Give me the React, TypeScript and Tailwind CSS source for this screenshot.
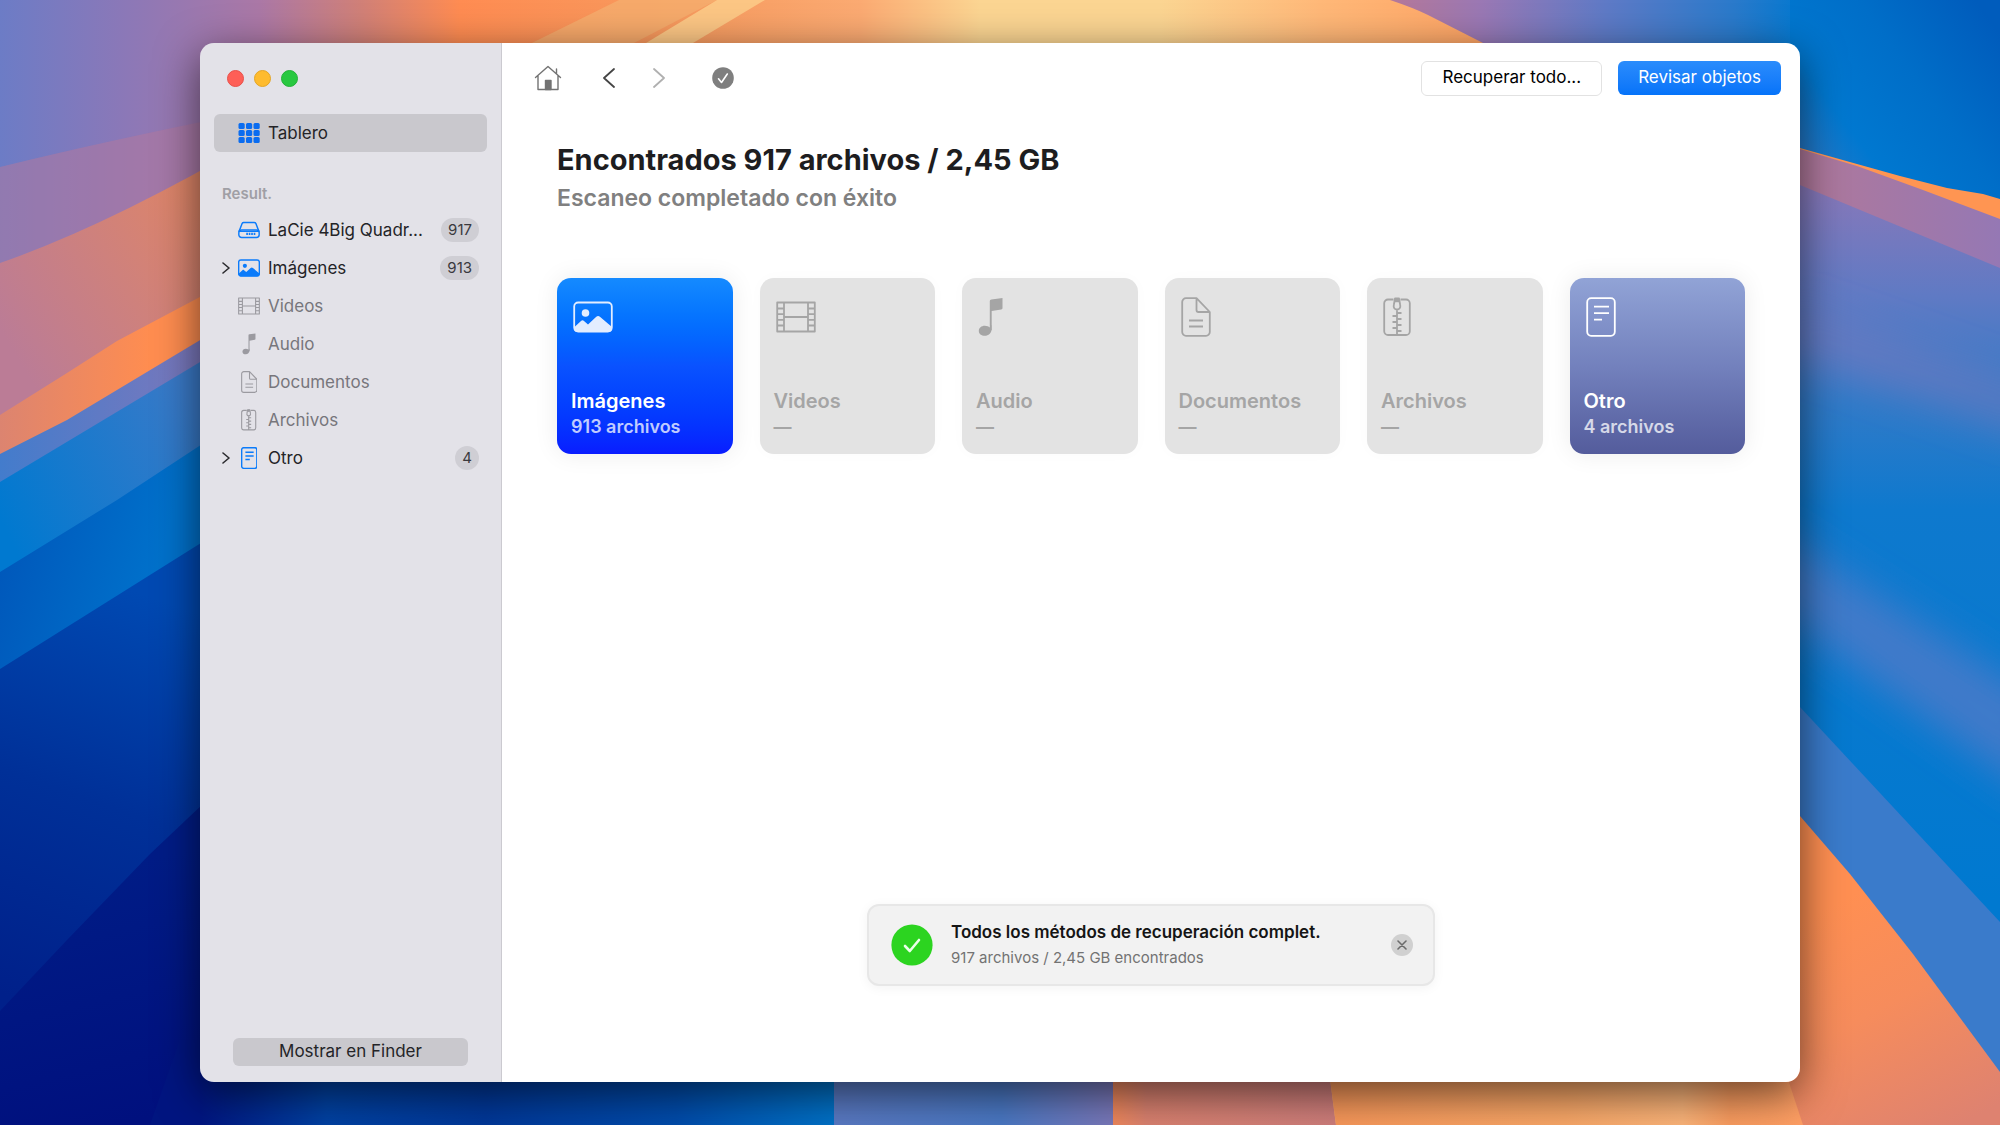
import { useState, type ReactNode } from "react";
import clsx from "clsx";

type IconName = "image" | "film" | "music" | "document" | "archive" | "other" | "drive";

interface Category {
  id: string;
  label: string;
  icon: IconName;
  count: number;
  cardClass: string;
}

const categories: Category[] = [
  { id: "imagenes", label: "Imágenes", icon: "image", count: 913, cardClass: "from-[#158aff] via-[#0a52ff] to-[#0a1cff]" },
  { id: "videos", label: "Videos", icon: "film", count: 0, cardClass: "" },
  { id: "audio", label: "Audio", icon: "music", count: 0, cardClass: "" },
  { id: "documentos", label: "Documentos", icon: "document", count: 0, cardClass: "" },
  { id: "archivos", label: "Archivos", icon: "archive", count: 0, cardClass: "" },
  { id: "otro", label: "Otro", icon: "other", count: 4, cardClass: "from-[#91a3d6] via-[#7381bd] to-[#545c9c]" },
];

// every icon is 40 units high, the width is its own
const icons: Record<IconName, { width: number; body: ReactNode }> = {
  image: {
    width: 40,
    body: (
      <>
        <rect x="1.2" y="5.5" width="37.6" height="29" rx="4" />
        <circle cx="12.5" cy="16" r="3.8" fill="currentColor" stroke="none" />
        <path d="M1.5 30L8 24c1-.9 2-.9 3 0l4 3.4 8-7.4c1.6-1.4 2.6-1.4 4.2 0L39 30v1.5a3.5 3.5 0 01-3.5 3.5h-31A3.5 3.5 0 011 31.5z" fill="currentColor" stroke="none" />
      </>
    ),
  },
  film: {
    width: 40,
    body: <path d="M1.2 5.5h37.6v29H1.2zM8 5.5v29M32 5.5v29M8 20h24M1.2 11.5H8M1.2 17.2H8M1.2 22.8H8M1.2 28.5H8M32 11.5h6.8M32 17.2h6.8M32 22.8h6.8M32 28.5h6.8" />,
  },
  music: {
    width: 26,
    body: (
      <g fill="currentColor" stroke="none">
        <path d="M11.8 4.2c0-1 .6-1.6 1.6-1.8L24.500 1v10c0 .8-.5 1.200-1.300 1.400l-9.500 1.600v19.300h-1.900z" />
        <path d="M13.500 28v4.500c0 3.500-3 6.300-6.700 6.300C3.300 38.800.8 37 .8 34c0-3 2.600-5.200 6-5.200 2.200 0 3.800.7 5 1.700z" />
      </g>
    ),
  },
  document: {
    width: 30,
    body: <path d="M5 1.2h10.500L28.800 15v20a3.800 3.800 0 01-3.800 3.800H5A3.800 3.800 0 011.200 35V5A3.800 3.800 0 015 1.2zM15.500 1.500V13a2 2 0 002 2h11M8 23.500h14M8 29.500h14" />,
  },
  archive: {
    width: 28,
    body: (
      <>
        <path d="M10.500 2.500H5A3.800 3.800 0 001.200 6.300v28A3.800 3.800 0 005 38h18a3.800 3.800 0 003.800-3.800v-28A3.800 3.800 0 0023 2.500h-5.500" />
        <path d="M12 1.200h4v4h-4z" fill="currentColor" stroke="none" />
        <path d="M12 1.500h4l1.200 6.500c.6 2.600-.9 4.500-3.200 4.500S10.200 10.600 10.800 8zM14 12.500V38" />
        <path d="M14 16h4.500M9.500 19H14M14 22h4.500M9.500 25H14M14 28h4.500M9.500 31H14M14 34h4.500" />
      </>
    ),
  },
  other: {
    width: 30,
    body: (
      <>
        <rect x="1.2" y="1.2" width="27.6" height="37.6" rx="4" />
        <path d="M8 9.700h15M8 16.200h15M8 22.700h8" />
      </>
    ),
  },
  drive: {
    width: 40,
    body: (
      <>
        <path d="M10.500 6.500h19c1.500 0 2.500.8 3.200 2L38 22.500H2L7.300 8.500c.7-1.200 1.700-2 3.200-2z" />
        <rect x="1.500" y="20" width="37" height="13.500" rx="5" />
        <path d="M15 27h18" strokeWidth="4" strokeDasharray="3 1.5" />
      </>
    ),
  },
};

function Icon({ name, className, stroke }: { name: IconName; className: string; stroke: number }) {
  const { width, body } = icons[name];
  return (
    <svg viewBox={`0 0 ${width} 40`} className={className} fill="none" stroke="currentColor" strokeWidth={stroke} strokeLinejoin="round" aria-hidden="true">
      {body}
    </svg>
  );
}

function GridIcon() {
  return (
    <svg viewBox="0 0 22 22" className="h-[22px] w-[22px] fill-[#0a6cf0]" aria-hidden="true">
      {[1, 8, 15].map((y) => [0.5, 8, 15.5].map((x) => <rect key={`${x}-${y}`} x={x} y={y} width="6.2" height="6" rx="1.5" />))}
    </svg>
  );
}

function SidebarRow({ icon, label, count, expandable }: { icon: IconName; label: string; count: number; expandable?: boolean }) {
  const empty = count === 0;
  return (
    <li>
      <a href={`#${label}`} className="flex h-[38px] items-center pr-2 pl-2">
        <span className="w-4 shrink-0">
          {expandable && (
            <svg viewBox="0 0 8 12" className="h-3 w-2 fill-none stroke-[#2b2b2e]" aria-hidden="true">
              <path d="M1 1l6 5-6 5" strokeWidth="1.6" strokeLinecap="round" strokeLinejoin="round" />
            </svg>
          )}
        </span>
        <span className="flex w-[22px] shrink-0 justify-center">
          <Icon name={icon} stroke={empty ? 2 : 2.6} className={clsx("h-[22px] w-auto", empty ? "text-[#9b9aa0]" : "text-[#0b7bfa]")} />
        </span>
        <span className={clsx("ml-2 flex-1 pt-0.5 whitespace-nowrap", empty ? "text-[#77767c]" : "text-[#242427]")}>{label}</span>
        {!empty && <span className="flex h-6 min-w-6 items-center justify-center rounded-full bg-[#cfced4] px-[7px] text-[15px] text-[#3a393e]">{count}</span>}
      </a>
    </li>
  );
}

function CategoryCard({ category }: { category: Category }) {
  const empty = category.count === 0;
  return (
    <button
      type="button"
      disabled={empty}
      className={clsx(
        "flex aspect-square flex-col items-start rounded-[14px] px-3.5 pt-[19px] pb-3.5 text-left font-semibold",
        empty ? "bg-[#e3e3e3] text-[#a5a5a5] shadow-[0_0_16px_rgba(0,0,0,0.02)]" : "bg-linear-to-b text-white shadow-[0_0_24px_rgba(0,0,0,0.08)]",
        category.cardClass
      )}
    >
      <Icon name={category.icon} stroke={1.8} className={clsx("ml-0.5 h-10 w-auto", category.id === "imagenes" && "text-[#e3edff]")} />
      <span className="mt-auto text-xl leading-[26px]">{category.label}</span>
      <span className={clsx("text-lg leading-[26px]", !empty && "text-white/75")}>{empty ? "—" : `${category.count} archivos`}</span>
    </button>
  );
}

function Wallpaper() {
  return (
    <svg viewBox="0 0 2000 1125" preserveAspectRatio="none" className="absolute inset-0 h-full w-full" aria-hidden="true">
      <defs>
        <linearGradient id="sky" x1="0" x2="2000" y1="0" y2="0" gradientUnits="userSpaceOnUse">
          <stop offset="0" stopColor="#6c7cc6" />
          <stop offset="0.06" stopColor="#8a78b8" />
          <stop offset="0.13" stopColor="#ab78a6" />
          <stop offset="0.18" stopColor="#d08078" />
          <stop offset="0.23" stopColor="#ff8c52" />
          <stop offset="0.34" stopColor="#f79a5e" />
          <stop offset="0.43" stopColor="#fbaa72" />
          <stop offset="0.49" stopColor="#fbd592" />
          <stop offset="0.58" stopColor="#fbd592" />
          <stop offset="0.66" stopColor="#ffb878" />
          <stop offset="0.74" stopColor="#ffa565" />
        </linearGradient>
        <linearGradient id="right-sky" x1="1390" x2="2000" y1="0" y2="60" gradientUnits="userSpaceOnUse">
          <stop offset="0" stopColor="#b57898" />
          <stop offset="0.15" stopColor="#9a78b4" />
          <stop offset="0.35" stopColor="#5f7ac6" />
          <stop offset="0.56" stopColor="#2a7acb" />
          <stop offset="0.68" stopColor="#0078d0" />
          <stop offset="1" stopColor="#005ebe" />
        </linearGradient>
        <linearGradient id="right-upper" x1="1800" x2="1990" y1="160" y2="20" gradientUnits="userSpaceOnUse">
          <stop offset="0" stopColor="#2a79c8" />
          <stop offset="0.25" stopColor="#0078d0" />
          <stop offset="0.6" stopColor="#006ec8" />
          <stop offset="1" stopColor="#005cbc" />
        </linearGradient>
        <linearGradient id="l2" x1="0" x2="200" y1="330" y2="210" gradientUnits="userSpaceOnUse">
          <stop offset="0" stopColor="#bb7c96" />
          <stop offset="1" stopColor="#de8568" />
        </linearGradient>
        <linearGradient id="l3" x1="0" x2="150" y1="0" y2="0" gradientUnits="userSpaceOnUse">
          <stop offset="0" stopColor="#dc8470" />
          <stop offset="1" stopColor="#ff8d50" />
        </linearGradient>
        <linearGradient id="l4" x1="0" x2="200" y1="0" y2="0" gradientUnits="userSpaceOnUse">
          <stop offset="0" stopColor="#437ccc" />
          <stop offset="1" stopColor="#7c78bc" />
        </linearGradient>
        <linearGradient id="l5" x1="0" x2="200" y1="520" y2="420" gradientUnits="userSpaceOnUse">
          <stop offset="0" stopColor="#0079d0" />
          <stop offset="1" stopColor="#3a7ac8" />
        </linearGradient>
        <linearGradient id="l6" x1="0" x2="150" y1="560" y2="600" gradientUnits="userSpaceOnUse">
          <stop offset="0" stopColor="#0058bb" />
          <stop offset="1" stopColor="#0071cb" />
        </linearGradient>
        <linearGradient id="l7" x1="160" x2="20" y1="600" y2="1000" gradientUnits="userSpaceOnUse">
          <stop offset="0" stopColor="#0049b2" />
          <stop offset="0.5" stopColor="#003098" />
          <stop offset="1" stopColor="#00208a" />
        </linearGradient>
        <linearGradient id="l8" x1="200" x2="834" y1="0" y2="0" gradientUnits="userSpaceOnUse">
          <stop offset="0" stopColor="#001580" />
          <stop offset="0.2" stopColor="#0042a4" />
          <stop offset="0.45" stopColor="#00389a" />
          <stop offset="0.75" stopColor="#004cac" />
          <stop offset="1" stopColor="#0072c8" />
        </linearGradient>
        <linearGradient id="l9" x1="60" x2="120" y1="880" y2="1125" gradientUnits="userSpaceOnUse">
          <stop offset="0" stopColor="#001c86" />
          <stop offset="1" stopColor="#00107e" />
        </linearGradient>
        <linearGradient id="b2" x1="834" x2="1113" y1="0" y2="0" gradientUnits="userSpaceOnUse">
          <stop offset="0" stopColor="#5a7ac4" />
          <stop offset="0.6" stopColor="#4a78c4" />
          <stop offset="1" stopColor="#7a78ba" />
        </linearGradient>
        <linearGradient id="b3" x1="1113" x2="1336" y1="0" y2="0" gradientUnits="userSpaceOnUse">
          <stop offset="0" stopColor="#f0885c" />
          <stop offset="0.15" stopColor="#db8270" />
          <stop offset="1" stopColor="#cf7e7c" />
        </linearGradient>
        <linearGradient id="b4" x1="1330" x2="1800" y1="0" y2="0" gradientUnits="userSpaceOnUse">
          <stop offset="0" stopColor="#f9985a" />
          <stop offset="0.5" stopColor="#faa868" />
          <stop offset="0.75" stopColor="#fdb57a" />
          <stop offset="0.85" stopColor="#fb9d60" />
          <stop offset="1" stopColor="#ff9f64" />
        </linearGradient>
        <linearGradient id="r-mid" x1="0" x2="0" y1="190" y2="900" gradientUnits="userSpaceOnUse">
          <stop offset="0" stopColor="#8678ba" />
          <stop offset="0.15" stopColor="#5f7ac4" />
          <stop offset="0.3" stopColor="#307ac8" />
          <stop offset="0.45" stopColor="#0e79ce" />
          <stop offset="1" stopColor="#0079d0" />
        </linearGradient>
        <linearGradient id="r-mauve" x1="1800" x2="2000" y1="0" y2="0" gradientUnits="userSpaceOnUse">
          <stop offset="0" stopColor="#b0789a" />
          <stop offset="1" stopColor="#9578b4" />
        </linearGradient>
        <linearGradient id="r-orange" x1="1840" x2="1960" y1="900" y2="1125" gradientUnits="userSpaceOnUse">
          <stop offset="0" stopColor="#ff8f52" />
          <stop offset="0.45" stopColor="#f68c5c" />
          <stop offset="1" stopColor="#de8270" />
        </linearGradient>
        <filter id="soft" x="-20%" y="-20%" width="140%" height="140%">
          <feGaussianBlur stdDeviation="20" />
        </filter>
      </defs>
      <rect width="2000" height="1125" fill="url(#sky)" />
      <path d="M619 0h98l-83 43-20 60H410z" fill="#f5b070" fillOpacity="0.7" />
      <path d="M717 0h48l-72 43-20 20h-60z" fill="#fcc684" />
      <path d="M1390 0q24 8 38 15l55 28 60 40h260V0z" fill="url(#right-sky)" />
      <path d="M1790 0h210v260H1790z" fill="url(#right-upper)" />

      <path d="M0 167Q110 140 260 110v300H0z" fill="#b0789e" fillOpacity="0.55" />
      <path d="M0 263Q110 225 260 137v400H0z" fill="url(#l2)" />
      <path d="M0 415L67 373 117 341 260 265v400H0z" fill="url(#l3)" />
      <path d="M0 454L67 420 260 304v400H0z" fill="url(#l4)" />
      <path d="M0 482L260 326v400H0z" fill="url(#l5)" />
      <path d="M0 572L117 500 260 406v400H0z" fill="url(#l6)" />
      <path d="M0 669L260 506v619H0z" fill="url(#l7)" />
      <path d="M0 1011L67 940 150 854 260 750v375H0z" fill="url(#l9)" />

      <path d="M1700 110L1800 148 1857 164 1900 176 1947 188 1983 194 2000 199V300H1700z" fill="#ff9552" />
      <path d="M1700 115L1800 149 1857 166 1923 190 2000 219V400H1700z" fill="url(#r-mauve)" />
      <path d="M1700 145L1800 185 2000 268V1125H1700z" fill="url(#r-mid)" />
      <path d="M1780 300L2040 390V440L1780 350z" fill="#8078bc" fillOpacity="0.5" filter="url(#soft)" />
      <path d="M1760 520L2040 700V800L1760 600z" fill="#4f7ac8" fillOpacity="0.8" filter="url(#soft)" />
      <path d="M1700 600L1800 707 2000 922V1125H1700z" fill="#3a7bcb" />
      <path d="M1700 720L1800 816 1850 874 1913 954 2000 1072V1125H1700z" fill="url(#r-orange)" />

      <path d="M180 1040H834v85H150z" fill="url(#l8)" />
      <path d="M834 1040h279v85H834z" fill="url(#b2)" />
      <path d="M1113 1040h212l11 85h-223z" fill="url(#b3)" />
      <path d="M1325 1040h450l28 85H1336z" fill="url(#b4)" />
    </svg>
  );
}

export default function App() {
  const [toastOpen, setToastOpen] = useState(true);

  return (
    <div className="relative flex min-h-screen px-[10%] py-[43px] font-['Inter','Liberation_Sans',sans-serif] text-[17px] text-[#1d1d1f]">
      <Wallpaper />
      <div className="relative flex flex-1 overflow-hidden rounded-[14px] shadow-[0_12px_44px_rgba(0,0,0,0.6)]">
        <aside className="flex w-[302px] shrink-0 flex-col border-r border-[#cbcad0] bg-[#e3e2e8] px-3.5">
          <div className="flex h-[71px] items-center gap-2.5 pl-[13px]">
            <button type="button" aria-label="Cerrar" className="h-[17px] w-[17px] rounded-full border border-[#e8504a] bg-[#fe5f57]" />
            <button type="button" aria-label="Minimizar" className="h-[17px] w-[17px] rounded-full border border-[#e3a526] bg-[#febb2e]" />
            <button type="button" aria-label="Ampliar" className="h-[17px] w-[17px] rounded-full border border-[#24b138] bg-[#28c840]" />
          </div>
          <a href="#tablero" className="flex h-[38px] items-center gap-2 rounded-md bg-[#c9c8cd] pl-6 text-[#242427]">
            <GridIcon />
            <span className="pt-0.5">Tablero</span>
          </a>
          <h2 className="mt-[30px] mb-[5px] pl-2 text-[15px] leading-6 font-semibold text-[#a09fa5]">Result.</h2>
          <ul>
            <SidebarRow icon="drive" label="LaCie 4Big Quadr..." count={917} />
            {categories.map((c) => (
              <SidebarRow key={c.id} icon={c.icon} label={c.label} count={c.count} expandable={c.count > 0} />
            ))}
          </ul>
          <button type="button" className="mx-[19px] mt-auto mb-4 h-7 rounded-md bg-[#c9c8cd] text-[#242427]">
            Mostrar en Finder
          </button>
        </aside>

        <main className="flex min-w-0 flex-1 flex-col bg-white">
          <header className="flex h-[70px] items-center pr-[19px] pl-8">
            <button type="button" aria-label="Inicio">
              <svg viewBox="0 0 28 26" className="h-[26px] w-7 fill-none stroke-[#737373]" strokeWidth="1.4" strokeLinejoin="round" strokeLinecap="round">
                <path d="M1.500 12.500L14 1.500l12.500 11M4 10.500V24.500h20V10.500M22.500 4v5" />
                <path d="M11.500 15.500h5.500v9h-5.500z" fill="#737373" />
              </svg>
            </button>
            <button type="button" aria-label="Atrás" className="ml-10">
              <svg viewBox="0 0 14 20" className="h-5 w-3.5 fill-none stroke-[#454545]" strokeWidth="1.8" strokeLinejoin="round" strokeLinecap="round">
                <path d="M12 1L2 10l10 9" />
              </svg>
            </button>
            <button type="button" aria-label="Adelante" disabled className="ml-9">
              <svg viewBox="0 0 14 20" className="h-5 w-3.5 fill-none stroke-[#b0b0b0]" strokeWidth="1.8" strokeLinejoin="round" strokeLinecap="round">
                <path d="M2 1l10 9-10 9" />
              </svg>
            </button>
            <button type="button" aria-label="Estado del escaneo" className="ml-[46px]">
              <svg viewBox="0 0 22 22" className="h-[22px] w-[22px]" fill="none">
                <circle cx="11" cy="11" r="10.8" fill="#7f7f7f" />
                <path d="M6.500 11.800l3 3.700 5.800-8.500" stroke="#fff" strokeWidth="1.6" strokeLinecap="round" strokeLinejoin="round" />
              </svg>
            </button>
            <div className="ml-auto flex items-center gap-4">
              <button type="button" className="h-[35px] rounded-md border border-[#e2e2e2] bg-white px-5 text-black">
                Recuperar todo...
              </button>
              <button type="button" className="h-[34px] rounded-md bg-linear-to-b from-[#2a8cfc] to-[#0573f9] px-5 text-white">
                Revisar objetos
              </button>
            </div>
          </header>

          <section className="px-[55px] pt-[29px]">
            <h1 className="text-[29px] leading-9 font-bold">Encontrados 917 archivos / 2,45 GB</h1>
            <p className="mt-1.5 text-[23px] leading-7 font-semibold text-[#808080]">Escaneo completado con éxito</p>
            <div className="mt-[66px] grid grid-cols-6 gap-[27px]">
              {categories.map((c) => (
                <CategoryCard key={c.id} category={c} />
              ))}
            </div>
          </section>

          {toastOpen && (
            <div role="status" className="mx-auto mt-auto mb-24 flex h-[82px] w-[568px] items-center rounded-xl border-2 border-[#e7e7e7] bg-[#f2f2f2] pr-5 pl-[22px] shadow-[0_2px_12px_rgba(0,0,0,0.05)]">
              <svg viewBox="0 0 42 42" className="h-[42px] w-[42px] shrink-0" fill="none" aria-hidden="true">
                <circle cx="21" cy="21" r="20.6" fill="#2cd420" />
                <path d="M14 22l4.800 5L28 16" stroke="#eaffea" strokeWidth="2.6" strokeLinecap="round" strokeLinejoin="round" />
              </svg>
              <div className="ml-[18px]">
                <p className="text-[17px] leading-[25px] font-semibold text-[#151515]">Todos los métodos de recuperación complet.</p>
                <p className="text-[15px] leading-[25px] text-[#737373]">917 archivos / 2,45 GB encontrados</p>
              </div>
              <button type="button" aria-label="Cerrar aviso" onClick={() => setToastOpen(false)} className="ml-auto flex h-[22px] w-[22px] items-center justify-center rounded-full bg-[#d0d0d0]">
                <svg viewBox="0 0 10 10" className="h-2.5 w-2.5 fill-none stroke-[#6b6b6b]" strokeWidth="1.6" strokeLinecap="round">
                  <path d="M1 1l8 8M9 1L1 9" />
                </svg>
              </button>
            </div>
          )}
        </main>
      </div>
    </div>
  );
}
